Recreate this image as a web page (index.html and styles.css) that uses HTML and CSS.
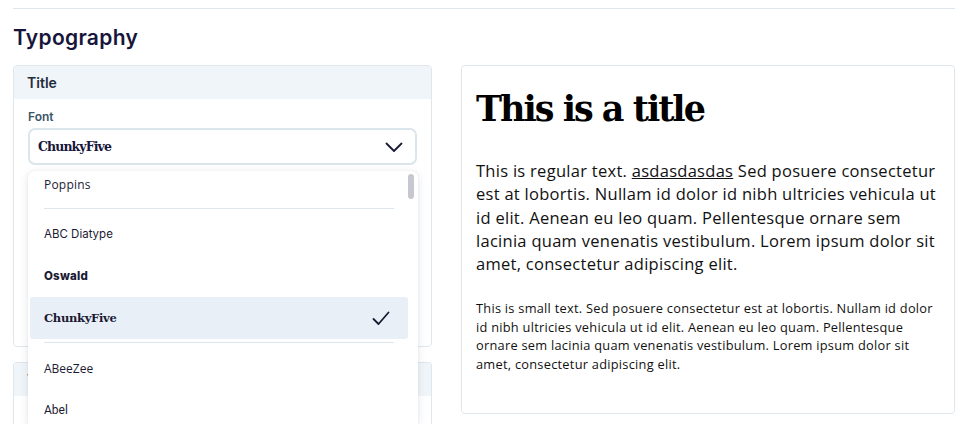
FILE: index.html
```html
<!DOCTYPE html>
<html>
<head>
<meta charset="utf-8">
<link rel="stylesheet" href="styles.css">
</head>
<body>
<div class="page">
  <hr class="rule">
  <h2 class="section-title">Typography</h2>
  <div class="layout">
    <div class="left-col">
      <div class="card">
        <div class="card-head">Title</div>
        <div class="card-body">
          <label class="field-label">Font</label>
          <div class="select-wrap">
            <div class="select">
              <span class="select-value">ChunkyFive</span>
              <svg class="chevron" width="18" height="12" viewBox="0 0 18 12"><path d="M1.5 2.5 L9 10 L16.5 2.5" fill="none" stroke="#1b1a33" stroke-width="1.8" stroke-linecap="round" stroke-linejoin="round"/></svg>
            </div>
            <div class="dropdown">
              <div class="scroll-thumb"></div>
              <ul class="options">
                <li class="opt f-poppins">Poppins</li>
                <li class="sep"></li>
                <li class="opt f-diatype">ABC Diatype</li>
                <li class="opt f-oswald">Oswald</li>
                <li class="opt f-chunky selected">ChunkyFive
                  <svg class="check" width="18" height="15" viewBox="0 0 18 15"><path d="M1.5 8 L6.5 13 L16.5 1.5" fill="none" stroke="#1b1a33" stroke-width="1.8" stroke-linecap="round" stroke-linejoin="round"/></svg>
                </li>
                <li class="sep"></li>
                <li class="opt f-abeezee">ABeeZee</li>
                <li class="opt f-abel">Abel</li>
              </ul>
            </div>
          </div>
          <div class="field-gap"></div>
          <div class="select ghost"></div>
          <div class="field-gap"></div>
          <div class="select ghost"></div>
        </div>
      </div>
      <div class="card card-open">
        <div class="card-head">Text</div>
        <div class="card-body short"></div>
      </div>
    </div>
    <div class="preview">
      <h1 class="preview-title">This is a title</h1>
      <p class="preview-text">This is regular text. <a href="#">asdasdasdas</a> Sed posuere consectetur est at lobortis. Nullam id dolor id nibh ultricies vehicula ut id elit. Aenean eu leo quam. Pellentesque ornare sem lacinia quam venenatis vestibulum. Lorem ipsum dolor sit amet, consectetur adipiscing elit.</p>
      <p class="preview-small">This is small text. Sed posuere consectetur est at lobortis. Nullam id dolor id nibh ultricies vehicula ut id elit. Aenean eu leo quam. Pellentesque ornare sem lacinia quam venenatis vestibulum. Lorem ipsum dolor sit amet, consectetur adipiscing elit.</p>
    </div>
  </div>
</div>
</body>
</html>
```
FILE: styles.css
```css
* { box-sizing: border-box; }
html, body { margin: 0; padding: 0; background: #fff; overflow: hidden; height: 424px; }
body { font-family: "Open Sans", "Liberation Sans", sans-serif; color: #1b1a33; }

.page { padding: 8px 10px 0 13px; }
.rule { border: 0; border-top: 1px solid #dce6ec; margin: 0; height: 0; }

.section-title {
  font-family: Inter, "Liberation Sans", sans-serif;
  font-weight: 600;
  font-size: 21px;
  letter-spacing: 0.3px;
  color: #17163a;
  margin: 16px 0 0 0;
  line-height: 25px;
  height: 40px;
}

.layout { display: grid; grid-template-columns: 419px 494px; column-gap: 29px; align-items: start; }
.left-col { display: flex; flex-direction: column; gap: 15px; }

.card { border: 1px solid #dfe7ed; border-radius: 4px; background: #fff; }
.card-open { border-bottom: 0; border-radius: 4px 4px 0 0; }
.card-head {
  background: #f0f5f9;
  height: 33px;
  padding: 0 13px;
  display: flex; align-items: center;
  font-family: Inter, "Liberation Sans", sans-serif;
  font-weight: 600; font-size: 14px; color: #1f2d3d;
  border-radius: 4px 4px 0 0;
}
.card-body { padding: 11px 14px 31px 14px; }
.card-body.short { height: 28px; padding: 0; }
.field-label {
  display: block;
  font-family: Inter, "Liberation Sans", sans-serif;
  font-weight: 600; font-size: 12px; color: #3a5566;
  line-height: 14px; margin-bottom: 4px;
}
.field-gap { height: 38px; }

.select-wrap { position: relative; }
.select {
  height: 37px;
  border: 2px solid #dbe5ec;
  border-radius: 7px;
  display: flex; align-items: center; justify-content: space-between;
  padding: 0 12px 0 8px;
}
.select-value {
  font-family: "DejaVu Serif", serif; font-weight: 700;
  font-size: 12.5px; letter-spacing: -0.9px; color: #17163a;
}
.chevron { display: block; }

.dropdown {
  position: absolute; left: 0; right: -1px; top: calc(100% + 6px);
  height: 254px;
  background: #fff;
  border-radius: 6px 6px 0 0;
  box-shadow: 0 2px 8px rgba(30, 40, 70, 0.12), 0 0 1px rgba(30, 40, 70, 0.15);
  overflow: hidden;
  z-index: 5;
}
.scroll-thumb {
  position: absolute; right: 4px; top: 3px; width: 6px; height: 25px;
  border-radius: 3px; background: #c7c8cf;
}
.options { list-style: none; margin: -8px 0 0 0; padding: 0 10px 0 2px; }
.opt {
  height: 42px; display: flex; align-items: center; justify-content: space-between;
  padding: 0 18px 0 14px; border-radius: 3px; font-size: 12px; color: #1b1a33;
}
.sep { height: 8px; position: relative; }
.sep::after { content: ""; position: absolute; left: 14px; right: 14px; top: 3px; border-top: 1px solid #dde6ee; }
.opt.selected { background: #e9eff7; }
.f-poppins { font-family: "Open Sans", sans-serif; font-size: 12px; letter-spacing: 0.2px; }
.f-diatype { font-family: Inter, sans-serif; font-size: 11.5px; }
.f-oswald { font-family: Inter, sans-serif; font-weight: 800; font-size: 11.5px; letter-spacing: 0.2px; }
.f-chunky { font-family: "DejaVu Serif", serif; font-weight: 700; font-size: 11.5px; letter-spacing: -0.3px; }
.f-abeezee { font-family: "Open Sans", sans-serif; font-size: 12px; }
.f-abel { font-family: "Liberation Sans Narrow", "Roboto", sans-serif; font-size: 12px; font-weight: 400; }
.check { display: block; }

.preview {
  border: 1px solid #dfe7ed; border-radius: 4px;
  padding: 20px 14px 26px 14px; height: 349px;
}
.preview-title {
  font-family: "DejaVu Serif", serif; font-weight: 700;
  font-size: 35px; line-height: 46px; margin: 0 0 27px 0; color: #000; letter-spacing: -2px;
}
.preview-text {
  font-family: "Open Sans", sans-serif; font-size: 16.5px; line-height: 23.3px; color: #111;
  margin: 0 0 24px 0; letter-spacing: 0.28px;
}
.preview-text a { color: #111; text-decoration: underline; }
.preview-small {
  font-family: "Open Sans", sans-serif; font-size: 12.8px; line-height: 18.4px; color: #111;
  margin: 0; letter-spacing: 0.26px;
}
```
